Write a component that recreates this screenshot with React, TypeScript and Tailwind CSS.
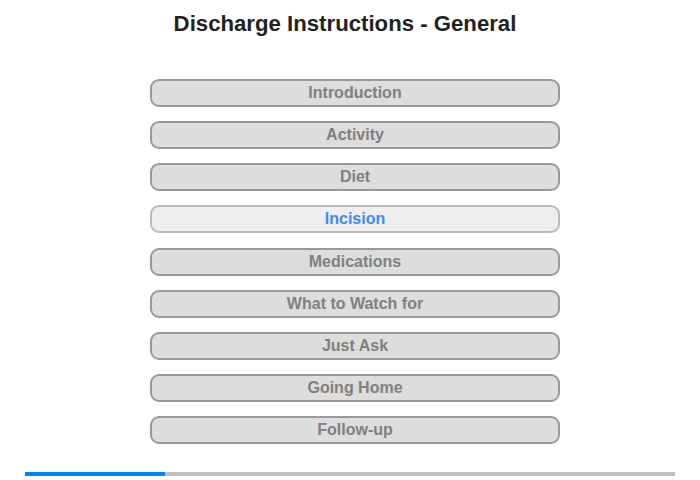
const items = [
  'Introduction',
  'Activity',
  'Diet',
  'Incision',
  'Medications',
  'What to Watch for',
  'Just Ask',
  'Going Home',
  'Follow-up',
];

const active = 'Incision';

export default function App() {
  return (
    <div className="w-[700px] h-[480px] bg-white font-['Liberation_Sans',Arial,sans-serif] flex flex-col">
      {/* Title */}
      <h1 className="pt-[11px] text-center text-[22.2px] font-bold text-[#222] leading-[26px] pr-[10px]">
        Discharge Instructions - General
      </h1>

      {/* Menu */}
      <div className="mt-[42px] ml-[150px] w-[410px] flex flex-col gap-[14.15px]">
        {items.map((label) => {
          const on = label === active;
          return (
            <div
              key={label}
              className={
                on
                  ? 'h-[28px] rounded-[9px] border-2 border-[#bbbbbb] bg-[#eeeeee] flex items-center justify-center text-[16px] font-bold text-[#3a8cff]'
                  : 'h-[28px] rounded-[9px] border-2 border-[#999999] bg-[#dddddd] flex items-center justify-center text-[16px] font-bold text-[#808080]'
              }
            >
              {label}
            </div>
          );
        })}
      </div>

      {/* Progress */}
      <div className="mt-[28px] ml-[25px] w-[650px] h-[4px] bg-[#c0c0c0] flex">
        <div className="w-[140px] h-full bg-[#0084ff]" />
      </div>
    </div>
  );
}
